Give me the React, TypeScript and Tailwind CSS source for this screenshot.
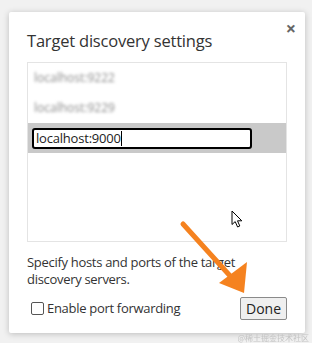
import React from 'react';

const hosts = ['localhost:9222', 'localhost:9229'];

const Arrow: React.FC = () => (
    <svg className="absolute left-0 top-0 pointer-events-none" width="312" height="343" viewBox="0 0 312 343">
        <line x1="183" y1="224" x2="232" y2="278" stroke="#f5821f" strokeWidth="5" strokeLinecap="round" />
        <polygon points="244,293 219,283 247,262" fill="#f5821f" />
    </svg>
);

const MouseCursor: React.FC = () => (
    <svg className="absolute left-[231px] top-[210px] pointer-events-none" width="14" height="19" viewBox="0 0 14 19">
        <path d="M1 1 L1 14.5 L4.2 11.6 L6.6 17 L8.8 16 L6.5 10.8 L10.8 10.8 Z" fill="#fff" stroke="#000" strokeWidth="1" strokeLinejoin="round" />
    </svg>
);

export default function App() {
    return (
        <div
            className="relative w-[312px] h-[343px] overflow-hidden bg-[#f1f1f1] pt-[12px] pl-[9px]"
            style={{ fontFamily: '"Open Sans", "Noto Sans", sans-serif' }}
        >
            <div className="relative w-[296px] h-[321px] bg-white rounded-[2px] shadow-[0_1px_6px_rgba(0,0,0,0.22)] flex flex-col px-[18px]">
                <button className="absolute top-[7px] right-[9px] text-[#666] text-[18px] font-bold leading-none">×</button>

                <h1 className="mt-[18px] text-[16.5px] leading-[22px] text-[#333] tracking-[-0.2px]">Target discovery settings</h1>

                <div className="mt-[10px] h-[180px] border border-[#e4e4e4] flex flex-col">
                    {hosts.map(h => (
                        <div key={h} className="h-[30px] flex items-center pl-[6px]">
                            <span className="text-[12px] text-[#888] blur-[1.4px]">{h}</span>
                        </div>
                    ))}
                    <div className="h-[30px] bg-[#c9c9c9] flex items-center pl-[4px]">
                        <div className="w-[220px] h-[21px] border-2 border-black rounded-[3px] bg-white flex items-center pl-[2px]">
                            <span className="text-[13px] text-[#222] leading-none tracking-[-0.2px]">localhost:9000</span>
                            <span className="w-px h-[15px] bg-black"></span>
                        </div>
                    </div>
                </div>

                <p className="mt-[12px] text-[13px] leading-[17px] text-[#333] tracking-[-0.3px]">
                    Specify hosts and ports of the target
                    <br />
                    discovery servers.
                </p>

                <div className="mt-[9px] flex items-center justify-between">
                    <label className="flex items-center pl-[4px] gap-[3px] text-[13px] text-[#333] tracking-[-0.3px]">
                        <span className="w-[13px] h-[13px] border border-[#555] rounded-[2px] bg-white"></span>
                        Enable port forwarding
                    </label>
                    <button className="w-[47px] h-[23px] bg-[#efefef] border border-[#8a8a8a] rounded-[2px] text-[14px] text-[#222] leading-none">
                        Done
                    </button>
                </div>
            </div>

            <Arrow />
            <MouseCursor />

            <span
                className="absolute right-[3px] bottom-[1px] text-[8px] leading-none text-[#c4c4c4] blur-[0.3px]"
                style={{ fontFamily: '"Noto Sans CJK SC", sans-serif' }}
            >
                @稀土掘金技术社区
            </span>
        </div>
    );
}
